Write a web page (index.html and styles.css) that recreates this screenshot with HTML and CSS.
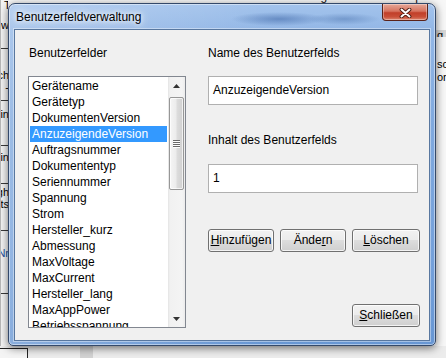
FILE: index.html
```html
<!DOCTYPE html>
<html lang="de">
<head>
<meta charset="utf-8">
<title>Benutzerfeldverwaltung</title>
<link rel="stylesheet" href="styles.css">
</head>
<body>
<div class="desktop">
  <div class="bg-top"><span>Benutzerfelder werden beim Speichern in die Vorlage übernommen quality</span></div>
  <div class="bg-left">
    <div class="cell c1"><span class="frag">Typ</span><span class="frag">Erw</span></div>
    <div class="cell c2"><span class="frag">Such</span><span class="frag">-</span></div>
    <div class="cell c3"><span class="frag">Ein</span></div>
    <div class="cell c4"><span class="frag">Min</span></div>
    <div class="cell c5"><span class="frag">High</span><span class="frag">Hits</span></div>
    <div class="cell c6"><span class="frag blue">Nr</span></div>
    <div class="cell c7"></div>
  </div>
  <div class="bg-right">
    <div class="band">g</div>
    <div class="rtext">sc</div>
    <div class="rtext">or</div>
  </div>
  <div class="bg-bottom">
    <div class="bb-cell"></div>
    <div class="bb-split"></div>
  </div>

  <div class="window">
    <div class="titlebar">
      <span class="title">Benutzerfeldverwaltung</span>
      <div class="close" aria-label="Schließen">
        <svg width="13" height="10" viewBox="0 0 13 10">
          <path d="M2.5 1.5 L10.5 8.5 M10.5 1.5 L2.5 8.5" stroke="#4b1a10" stroke-width="3.8" stroke-linecap="round" fill="none"/>
          <path d="M2.5 1.5 L10.5 8.5 M10.5 1.5 L2.5 8.5" stroke="#ffffff" stroke-width="2" stroke-linecap="round" fill="none"/>
        </svg>
      </div>
    </div>
    <div class="client">
      <div class="col-left">
        <div class="label">Benutzerfelder</div>
        <div class="listbox">
          <ul class="items">
            <li>Gerätename</li>
            <li>Gerätetyp</li>
            <li>DokumentenVersion</li>
            <li class="selected">AnzuzeigendeVersion</li>
            <li>Auftragsnummer</li>
            <li>Dokumententyp</li>
            <li>Seriennummer</li>
            <li>Spannung</li>
            <li>Strom</li>
            <li>Hersteller_kurz</li>
            <li>Abmessung</li>
            <li>MaxVoltage</li>
            <li>MaxCurrent</li>
            <li>Hersteller_lang</li>
            <li>MaxAppPower</li>
            <li>Betriebsspannung</li>
          </ul>
          <div class="vscroll">
            <div class="sb-btn">
              <svg width="7" height="4" viewBox="0 0 7 4"><polygon points="0,4 3.5,0 7,4" fill="#333"/></svg>
            </div>
            <div class="sb-thumb">
              <svg width="7" height="8" viewBox="0 0 7 8">
                <path d="M0 0.5 H7 M0 2.5 H7 M0 4.5 H7 M0 6.5 H7" stroke="#6a6a6a" stroke-width="1"/>
                <path d="M0 1.5 H7 M0 3.5 H7 M0 5.5 H7 M0 7.5 H7" stroke="#ffffff" stroke-width="1"/>
              </svg>
            </div>
            <div class="sb-track"></div>
            <div class="sb-btn">
              <svg width="7" height="4" viewBox="0 0 7 4"><polygon points="0,0 7,0 3.5,4" fill="#333"/></svg>
            </div>
          </div>
        </div>
      </div>
      <div class="col-right">
        <div class="label">Name des Benutzerfelds</div>
        <div class="textbox">AnzuzeigendeVersion</div>
        <div class="label label-2">Inhalt des Benutzerfelds</div>
        <div class="textbox textbox-2">1</div>
        <div class="buttons">
          <div class="btn btn-add"><u>H</u>inzufügen</div>
          <div class="btn btn-edit">Ände<u>r</u>n</div>
          <div class="btn btn-del"><u>L</u>öschen</div>
        </div>
        <div class="footer">
          <div class="btn btn-close"><u>S</u>chließen</div>
        </div>
      </div>
    </div>
  </div>
</div>
</body>
</html>
```

FILE: styles.css
```css
* { box-sizing: border-box; }
html, body { margin: 0; padding: 0; }
body {
  width: 446px;
  height: 358px;
  overflow: hidden;
  font-family: "Liberation Sans", Arial, sans-serif;
  font-size: 12px;
  color: #000;
}

.desktop {
  position: relative;
  width: 446px;
  height: 358px;
  overflow: hidden;
  background: #f7f7f7;
}

/* ---------- background application fragments ---------- */
.bg-top {
  position: absolute;
  left: 236px;
  top: -10px;
  width: 210px;
  white-space: nowrap;
  overflow: hidden;
  line-height: 13px;
  font-size: 12px;
  color: #111;
  display: flex;
  justify-content: flex-end;
}

.bg-left {
  position: absolute;
  left: 0;
  top: 0;
  width: 8px;
  height: 346px;
  background: #f4f4f4;
  display: flex;
  flex-direction: column;
  border-left: 1px solid #b8b8b8;
}
.cell {
  border-bottom: 1px solid #3a3a3a;
  display: flex;
  flex-direction: column;
  overflow: hidden;
  font-size: 11px;
  line-height: 12px;
}
.cell .frag {
  display: flex;
  justify-content: flex-end;
  white-space: nowrap;
  width: 8px;
  overflow: hidden;
}
.c1 { height: 49px; padding-top: 0; }
.c1 .frag:first-child { justify-content: flex-start; padding-left: 3px; margin-top: -1px; }
.c1 .frag:last-child { margin-top: 8px; }
.c2 { height: 52px; padding-top: 20px; }
.c3 { height: 45px; padding-top: 7px; }
.c4 { height: 38px; padding-top: 5px; }
.c5 { height: 47px; padding-top: 2px; }
.c6 { height: 63px; padding-top: 16px; }
.c7 { flex: 1; border-bottom: 0; }
.blue { color: #2050a0; }

.bg-right {
  position: absolute;
  left: 436px;
  top: 0;
  width: 10px;
  height: 346px;
  background: #f7f7f7;
  display: flex;
  flex-direction: column;
  padding-top: 30px;
  font-size: 11px;
}
.band {
  height: 7px;
  line-height: 10px;
  overflow: hidden;
  background: #d6d6d6;
  padding-left: 1px;
  margin-bottom: 21px;
}
.rtext {
  line-height: 13px;
  white-space: nowrap;
  padding-left: 1px;
}

.bg-bottom {
  position: absolute;
  left: 0;
  top: 346px;
  width: 446px;
  height: 12px;
  background: #ececec;
  display: flex;
  align-items: flex-end;
}
.bb-cell {
  width: 28px;
  height: 10px;
  border-top: 1px solid #222;
  border-right: 1px solid #222;
  background: #f4f4f4;
}
.bb-split {
  width: 13px;
  height: 12px;
  margin-left: 52px;
  background: #d2d2d2;
}

/* ---------- window ---------- */
.window {
  position: absolute;
  left: 8px;
  top: 3px;
  width: 428px;
  height: 343px;
  border: 1px solid #34496a;
  border-radius: 7px 7px 5px 5px;
  display: flex;
  flex-direction: column;
  padding: 0 5px 4px 5px;
  background:
    radial-gradient(ellipse 48px 7px at 270px 15px, rgba(60,100,165,0.55), rgba(60,100,165,0) 100%),
    radial-gradient(ellipse 36px 6px at 335px 15px, rgba(70,110,170,0.45), rgba(70,110,170,0) 100%),
    linear-gradient(to right, rgba(255,255,255,0.22) 0%, rgba(255,255,255,0.08) 40%, rgba(255,255,255,0) 60%),
    linear-gradient(to bottom, #a3c3ec 0px, #93b7e6 26px, #80a9de 120px, #74a0da 260px, #6796d3 100%);
  box-shadow:
    inset 0 0 0 1px rgba(255,255,255,0.45),
    0 2px 9px rgba(0,0,0,0.55);
}

.titlebar {
  height: 25px;
  display: flex;
  align-items: center;
}
.title {
  margin-left: 2px;
  margin-top: 1px;
  line-height: 15px;
  text-shadow:
    0 0 4px rgba(255,255,255,0.95),
    0 0 8px rgba(255,255,255,0.9),
    0 0 12px rgba(255,255,255,0.7);
}
.close {
  margin-left: auto;
  margin-right: 2px;
  align-self: flex-start;
  width: 46px;
  height: 17px;
  border: 1px solid #5a2218;
  border-top: 0;
  border-radius: 0 0 4px 4px;
  background: linear-gradient(to bottom, #e6a898 0%, #d6735f 45%, #c13f29 55%, #c94f38 80%, #dc8670 100%);
  box-shadow: inset 0 0 0 1px rgba(255,255,255,0.35);
  display: flex;
  align-items: center;
  justify-content: center;
  padding-top: 1px;
}

.client {
  flex: 1;
  background: #f0f0f0;
  border: 1px solid #58779f;
  box-shadow: 0 0 0 1px rgba(255,255,255,0.4);
  display: flex;
  padding: 16px 0 0 13px;
}

.label {
  height: 15px;
  line-height: 15px;
  margin-bottom: 15px;
  white-space: nowrap;
}

/* ---------- left column ---------- */
.col-left {
  width: 158px;
  display: flex;
  flex-direction: column;
}
.col-left .label { margin-left: 1px; }

.listbox {
  width: 158px;
  height: 252px;
  border: 1px solid #828790;
  background: #fff;
  display: flex;
}
.items {
  list-style: none;
  margin: 0;
  padding: 1px;
  flex: 1;
  overflow: hidden;
}
.items li {
  height: 16px;
  line-height: 16px;
  padding-left: 2px;
  white-space: nowrap;
}
.items li.selected {
  background: #3399ff;
  color: #fff;
}

.vscroll {
  width: 17px;
  display: flex;
  flex-direction: column;
  background: linear-gradient(to right, #e4e4e4 0px, #f1f1f1 2px, #f4f4f4 14px, #ececec 17px);
}
.sb-btn {
  height: 17px;
  display: flex;
  align-items: center;
  justify-content: center;
}
.sb-thumb {
  height: 93px;
  margin: 3px 1px 0 1px;
  border: 1px solid #979797;
  border-radius: 2px;
  background: linear-gradient(to right, #f5f5f5 0%, #ececec 45%, #dcdcdc 55%, #d0d0d0 100%);
  box-shadow: inset 0 0 0 1px rgba(255,255,255,0.7);
  display: flex;
  align-items: center;
  justify-content: center;
}
.sb-track { flex: 1; }

/* ---------- right column ---------- */
.col-right {
  width: 212px;
  margin-left: 22px;
  display: flex;
  flex-direction: column;
}
.textbox {
  width: 210px;
  height: 29px;
  border: 1px solid #b0b0b0;
  background: #fff;
  line-height: 27px;
  padding-left: 4px;
  white-space: nowrap;
}
.label-2 { margin-top: 28px; margin-bottom: 16px; }

.buttons {
  display: flex;
  gap: 6px;
  margin-top: 36px;
}
.btn {
  height: 23px;
  border: 1px solid #707070;
  border-radius: 3px;
  background: linear-gradient(to bottom, #f2f2f2 0%, #ebebeb 50%, #dddddd 50%, #cfcfcf 100%);
  box-shadow: inset 0 0 0 1px rgba(255,255,255,0.75);
  display: flex;
  align-items: center;
  justify-content: center;
  line-height: 15px;
  white-space: nowrap;
}
.btn-add { width: 66px; }
.btn-edit { width: 66px; }
.btn-del { width: 68px; }
.btn-close { width: 68px; }

.footer {
  display: flex;
  justify-content: flex-end;
  margin-top: 52px;
}
```
